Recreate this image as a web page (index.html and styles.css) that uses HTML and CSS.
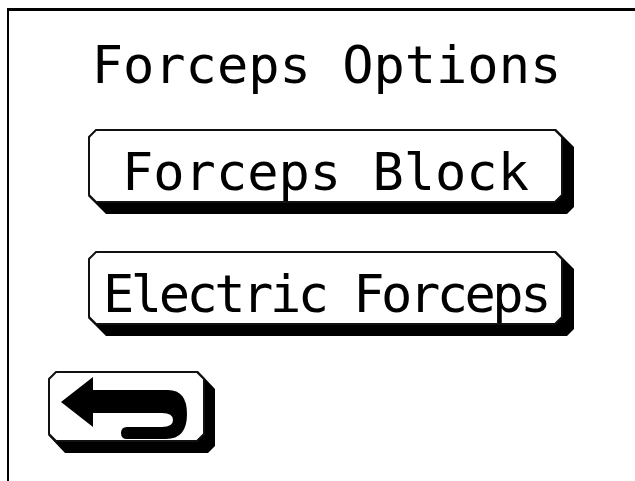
FILE: index.html
```html
<!DOCTYPE html>
<html>
<head>
    <title>Forceps Options</title>
    <link rel="stylesheet" href="styles.css">
</head>
<body>
    <div class="screen">
        <h2 class="title">Forceps Options</h2>

        <button class="opt">
            <svg class="frame" width="487" height="86" viewBox="0 0 487 86">
                <polygon points="468,0 486,18 486,78 479,85 18,85 0,67" fill="#000"/>
                <polygon points="8,1 467,1 474,8 474,66 467,73 8,73 1,66 1,8" fill="#fff" stroke="#111" stroke-width="2"/>
            </svg>
            <span class="label">Forceps Block</span>
        </button>

        <button class="opt">
            <svg class="frame" width="487" height="86" viewBox="0 0 487 86">
                <polygon points="468,0 486,18 486,78 479,85 18,85 0,67" fill="#000"/>
                <polygon points="8,1 467,1 474,8 474,66 467,73 8,73 1,66 1,8" fill="#fff" stroke="#111" stroke-width="2"/>
            </svg>
            <span class="label tight">Electric Forceps</span>
        </button>

        <button class="back">
            <svg class="frame" width="168" height="82" viewBox="0 0 168 82">
                <polygon points="150,0 167,18 167,75 160,82 17,82 0,64" fill="#000"/>
                <polygon points="8,1 149,1 156,8 156,63 149,70 8,70 1,63 1,8" fill="#fff" stroke="#111" stroke-width="2"/>
                <!-- return arrow -->
                <path d="M13,31 L45,6 L45,19 L120,19 Q139,19 139,43 Q139,68 118,68 L79,68 Q73,68 73,62 Q73,56 79,56 L114,56 Q125,56 125,49 Q125,42 114,42 L45,42 L45,56 Z" fill="#000"/>
            </svg>
        </button>
    </div>
</body>
</html>
```

FILE: styles.css
```css
html, body {
    margin: 0;
    padding: 0;
    background: #fff;
    height: 100%;
    overflow: hidden;
}

.screen {
    margin: 8px 0 0 7px;
    border-top: 3px solid #000;
    border-left: 2px solid #000;
    height: calc(100% - 11px);
    display: flex;
    flex-direction: column;
    align-items: flex-start;
    padding-top: 24px;
    font-family: "DejaVu Sans Mono", "Liberation Mono", monospace;
    color: #000;
}

.title {
    margin: 0 0 34px 80px;
    width: 475px;
    text-align: center;
    font-size: 52px;
    font-weight: normal;
    line-height: 60px;
}

.opt, .back {
    position: relative;
    margin: 0 0 36px 79px;
    padding: 0;
    border: none;
    background: none;
    font: inherit;
    color: inherit;
    width: 487px;
    height: 86px;
}

.back {
    margin: -2px 0 0 39px;
    width: 168px;
    height: 82px;
}

.frame {
    position: absolute;
    left: 0;
    top: 0;
}

.label {
    position: relative;
    display: flex;
    align-items: center;
    justify-content: center;
    width: 475px;
    height: 74px;
    font-size: 52px;
    line-height: 60px;
}

.tight {
    letter-spacing: -3.5px;
}
```
